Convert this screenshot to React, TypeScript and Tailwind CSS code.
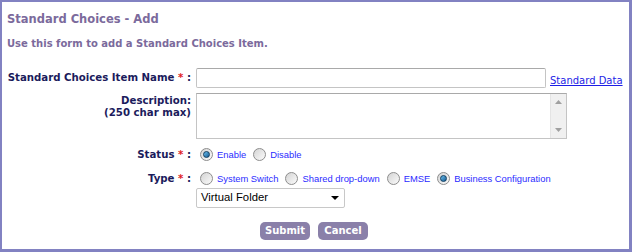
import React from 'react';

const Radio: React.FC<{ checked?: boolean }> = ({ checked }) => (
  <span className="relative inline-flex h-[13px] w-[13px] shrink-0 items-center justify-center rounded-full border border-[#8d8d8d] bg-gradient-to-br from-[#d4d4d4] to-[#fbfbfb]">
    {checked && (
      <span className="h-[7px] w-[7px] rounded-full border border-[#0d3c60] bg-gradient-to-br from-[#6cc0ef] to-[#155d93]" />
    )}
  </span>
);

const Option: React.FC<{ label: string; checked?: boolean }> = ({ label, checked }) => (
  <label className="flex items-center gap-[4px]">
    <Radio checked={checked} />
    <span className="text-[9.4px] font-normal text-[#2b2bff] [font-family:'Liberation_Sans',Arial,sans-serif]">{label}</span>
  </label>
);

const Req = () => <span className="text-[#e0201f]">*</span>;

export default function App() {
  return (
    <div className="h-[252px] w-[632px] overflow-hidden border-t-2 border-l-2 border-r-[3px] border-b-[3px] border-[#8282c2] bg-white [font-family:'DejaVu_Sans',Verdana,sans-serif]">
      <div className="px-[5px] pt-[9px]">
        <h1 className="text-[11.5px] font-bold leading-[16px] text-[#7b6a9c]">Standard Choices - Add</h1>
        <p className="mt-[10px] text-[10px] font-bold leading-[14px] text-[#7b6a9c]">Use this form to add a Standard Choices Item.</p>
      </div>

      <div className="mt-[17px] flex flex-col text-[10.2px] font-bold text-[#1b1b5c]">
        <div className="flex items-center">
          <div className="w-[189px] text-right">
            Standard Choices Item Name <Req /> :
          </div>
          <input className="ml-[5px] h-[20px] w-[350px] rounded-[2px] border border-[#c4c4c4] border-t-[#a9a9a9]" />
          <a className="ml-[4px] mt-[4px] text-[10px] font-normal text-[#1d1de6] underline">Standard Data</a>
        </div>

        <div className="mt-[5px] flex items-start">
          <div className="w-[189px] pt-[2px] text-right leading-[12px]">
            Description:
            <br />
            (250 char max)
          </div>
          <div className="ml-[5px] flex h-[46px] w-[371px] border border-[#c4c4c4] border-t-[#a9a9a9]">
            <div className="flex-1" />
            <div className="flex w-[16px] flex-col items-center justify-between border-l border-[#e4e4e4] bg-[#f0f0f0] py-[6px]">
              <svg width="7" height="4" viewBox="0 0 7 4"><path d="M0 4 L3.5 0 L7 4 Z" fill="#a0a0a0" /></svg>
              <svg width="7" height="4" viewBox="0 0 7 4"><path d="M0 0 L3.5 4 L7 0 Z" fill="#a0a0a0" /></svg>
            </div>
          </div>
        </div>

        <div className="mt-[8px] flex items-center">
          <div className="w-[189px] text-right">
            Status <Req /> :
          </div>
          <div className="ml-[5px] flex items-center gap-[7px] pl-[4px]">
            <Option label="Enable" checked />
            <Option label="Disable" />
          </div>
        </div>

        <div className="mt-[9px] flex items-center">
          <div className="w-[189px] text-right">
            Type <Req /> :
          </div>
          <div className="ml-[5px] flex items-center gap-[7px] pl-[4px]">
            <Option label="System Switch" />
            <Option label="Shared drop-down" />
            <Option label="EMSE" />
            <Option label="Business Configuration" checked />
          </div>
        </div>

        <div className="mt-[1px] flex">
          <div className="ml-[194px] flex h-[20px] w-[149px] items-center justify-between rounded-[2px] border border-[#c8c8c8] pl-[4px] pr-[5px]">
            <span className="text-[11.3px] font-normal text-black [font-family:'Liberation_Sans',Arial,sans-serif]">Virtual Folder</span>
            <svg width="8" height="4" viewBox="0 0 8 4"><path d="M0 0 L8 0 L4 4 Z" fill="#000" /></svg>
          </div>
        </div>

        <div className="mt-[14px] flex gap-[8px]">
          <div className="ml-[258px] flex h-[18px] w-[50px] items-center justify-center rounded-[5px] bg-[#8a80a9] text-[10px] font-bold text-white">Submit</div>
          <div className="flex h-[18px] w-[50px] items-center justify-center rounded-[5px] bg-[#8a80a9] text-[10px] font-bold text-white">Cancel</div>
        </div>
      </div>
    </div>
  );
}
